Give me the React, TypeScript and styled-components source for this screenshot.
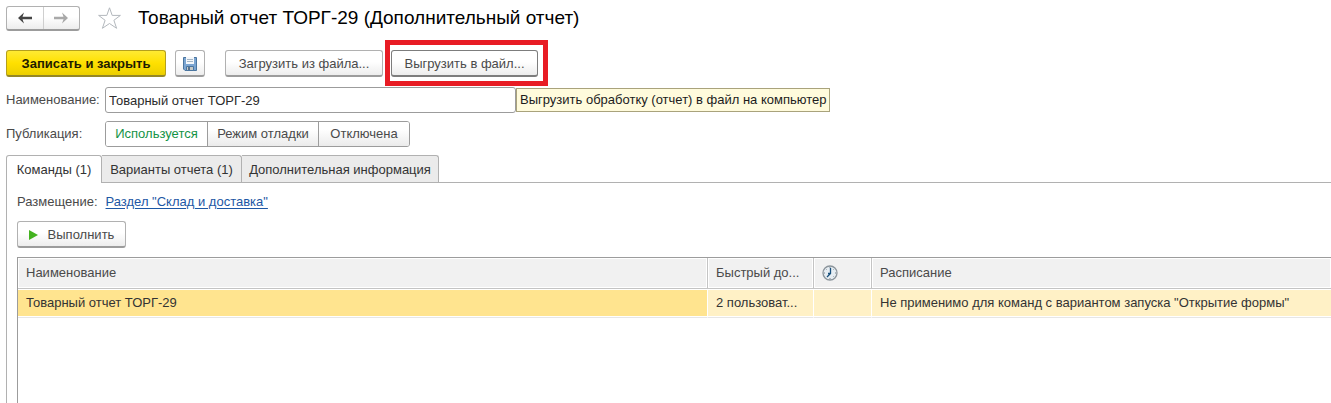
import React, { useState } from "react";
import styled, { createGlobalStyle, css } from "styled-components";

const GlobalStyle = createGlobalStyle`
  *, *::before, *::after { box-sizing: border-box; }
  html, body { margin: 0; background: #fff; }
  body, button, input, table {
    font-family: "Liberation Sans", Arial, sans-serif;
    font-size: 13px;
    line-height: 16px;
    color: #4a4a4a;
  }
`;

const Page = styled.main`
  display: flex;
  flex-direction: column;
  min-height: 100vh;
  padding: 5px 0 0 6px;
  overflow-x: hidden;
`;

const Header = styled.header`
  display: flex;
  align-items: center;
  height: 26px;
`;

const raised = css`
  border: 1px solid #b1b1b1;
  border-bottom: 2px solid #9c9c9c;
  border-radius: 3px;
  background: linear-gradient(#fff 45%, #ededed);
`;

const NavGroup = styled.nav`
  ${raised}
  display: flex;
  width: 74px;
  height: 25px;
`;

const NavButton = styled.button`
  display: flex;
  flex: 1;
  align-items: center;
  justify-content: center;
  padding: 0;
  border: 0;
  background: none;

  & + & {
    border-left: 1px solid #cfcfcf;
  }
`;

const StarButton = styled.button`
  display: flex;
  margin-left: 17px;
  padding: 0;
  border: 0;
  background: none;
`;

const Title = styled.h1`
  margin: 0 0 0 16px;
  font-size: 19px;
  line-height: 22px;
  font-weight: 400;
  color: #000;
  white-space: nowrap;
`;

const Toolbar = styled.div`
  display: flex;
  align-items: center;
  height: 46px;
  margin-top: 9px;
`;

const Button = styled.button<{ $width: number }>`
  ${raised}
  display: flex;
  flex: none;
  align-items: center;
  justify-content: center;
  width: ${(p) => p.$width}px;
  height: 27px;
  padding: 2px 0 0;
  white-space: nowrap;
  color: #4a4a4a;
`;

const PrimaryButton = styled(Button)`
  border-color: #b5a01c;
  border-bottom-color: #958725;
  background: linear-gradient(#ffea33, #ffe000 50%, #eccf00);
  font-weight: 700;
  color: #1f1c00;
`;

const SaveButton = styled(Button)`
  margin: 0 20px 0 9px;
`;

const HoverButton = styled(Button)`
  border-color: #7d7d7d;
`;

const Highlight = styled.div`
  margin-left: 2px;
  padding: 5px 5px 4px 1px;
  border: 5px solid #e81c24;
`;

const Field = styled.div`
  display: flex;
  align-items: center;
  height: 26px;
  margin-top: 1px;
`;

const OptionField = styled(Field)`
  margin-top: 8px;
`;

const FieldLabel = styled.label`
  flex: none;
  width: 99px;
  white-space: nowrap;
`;

const TextInput = styled.input`
  flex: none;
  width: 411px;
  height: 26px;
  padding: 0 3px;
  border: 1px solid #9c9c9c;
  border-radius: 3px;
  background: #fff;
  color: #2b2b2b;
  outline: none;
`;

const Tooltip = styled.div`
  flex: none;
  height: 24px;
  padding: 3px 2px 3px 3px;
  border: 1px solid #a9a37c;
  background: #fffbdc;
  color: #1c1c1c;
  white-space: nowrap;
`;

const Segments = styled.div`
  display: flex;
  height: 26px;
  border: 1px solid #9c9c9c;
  border-radius: 3px;
  overflow: hidden;
`;

const Segment = styled.label<{ $width: number }>`
  display: flex;
  align-items: center;
  justify-content: center;
  width: ${(p) => p.$width}px;
  background: linear-gradient(#fff 30%, #ebebeb);
  white-space: nowrap;

  & + & {
    border-left: 1px solid #9c9c9c;
  }

  &:has(input:checked) {
    background: #fff;
    color: #149346;
  }

  input {
    appearance: none;
    width: 0;
    height: 0;
    margin: 0;
  }
`;

const TabList = styled.div`
  display: flex;
  height: 27px;
  margin-top: 8px;
`;

const Tab = styled.button<{ $width: number }>`
  width: ${(p) => p.$width}px;
  height: 27px;
  padding: 1px 0 0;
  border: 1px solid #b1b1b1;
  border-width: 1px 1px 0 0;
  border-radius: 0 3px 0 0;
  background: #ebebeb;
  color: #333;
  white-space: nowrap;

  &:first-child {
    border-left-width: 1px;
    border-radius: 3px 3px 0 0;
  }

  &[aria-selected="true"] {
    position: relative;
    height: 28px;
    padding-top: 0;
    background: #fff;
  }
`;

const Panel = styled.section`
  display: flex;
  flex: 1;
  flex-direction: column;
  padding: 11px 0 0 10px;
  border: 1px solid #b1b1b1;
  border-width: 1px 0 0 1px;
`;

const Placement = styled.div`
  display: flex;
  gap: 8px;
`;

const Link = styled.a`
  color: #1d57a5;
  text-underline-offset: 2px;
`;

const RunButton = styled(Button)`
  gap: 10px;
  margin-top: 11px;
`;

const TableArea = styled.div`
  flex: 1;
  margin-top: 9px;
  border: 1px solid #9c9c9c;
  border-width: 1px 0 0 1px;
`;

const Table = styled.table`
  width: 100%;
  table-layout: fixed;
  border-collapse: separate;
  border-spacing: 0;
`;

const cell = css`
  padding: 0 8px;
  text-align: left;
  font-weight: 400;
  white-space: nowrap;
`;

const HeadCell = styled.th`
  ${cell}
  height: 31px;
  border-bottom: 1px solid #c4c4c4;
  background: #f1f1f1;
  box-shadow: inset 0 0 0 1px #fff;

  & + & {
    border-left: 1px solid #c4c4c4;
  }

  svg {
    display: block;
  }
`;

const BodyCell = styled.td<{ $active?: boolean }>`
  ${cell}
  height: 29px;
  border-bottom: 1px solid #e6e6e6;
  background: ${(p) => (p.$active ? "#ffe48f" : "#fff1c6")};
  box-shadow: inset 0 1px #fff, inset 0 -1px #fff;
  color: #333;

  & + & {
    border-left: 1px solid #fff;
  }
`;

const Arrow = ({ color, flip }: { color: string; flip?: boolean }) => (
  <svg width="14" height="12" viewBox="0 0 14 12" aria-hidden="true">
    <path
      d={flip ? "M14 6 8 0.5 9.5 4.8H0v2.4h9.500L8 11.500z" : "M0 6 6 0.5 4.5 4.8H14v2.4H4.500L6 11.500z"}
      fill={color}
    />
  </svg>
);

const Star = () => (
  <svg width="25" height="24" viewBox="0 0 25 24" aria-hidden="true">
    <path
      d="M12.5 1.8 15.2 9.4H23.4L16.9 14.3 19.6 22.3 12.5 17.5 5.4 22.3 8.1 14.3 1.6 9.4H9.8Z"
      fill="#fff"
      stroke="#b3b8bd"
    />
  </svg>
);

const Floppy = () => (
  <svg width="14" height="14" viewBox="0 0 14 14" aria-hidden="true">
    <path d="M0.5 0.5h13v13H2l-1.5-1.5z" fill="#7ba5d2" stroke="#4a759f" />
    <path d="M3 0h8v7H3z" fill="#f4f7fa" />
    <path d="M4 2.5h6M4 4.5h6" stroke="#a3b5c6" />
    <path d="M3.5 9.5h7v4h-7z" fill="#c6c8c5" stroke="#4a759f" />
    <path d="M5 10h2v3H5z" fill="#56718d" />
  </svg>
);

const Clock = () => (
  <svg width="16" height="16" viewBox="0 0 16 16" aria-hidden="true">
    <circle cx="8" cy="8" r="7" fill="#e6edf2" stroke="#8b949b" strokeWidth="1.3" />
    <path d="M8 2v1M8 13v1M2 8h1M13 8h1M12 4l-.5.5M4 4l.5.5M12 12l-.5-.5" stroke="#7a858e" />
    <path d="M8.5 3v5.5L5 12M8.5 8.5H6" fill="none" stroke="#174f7c" strokeWidth="1.3" />
  </svg>
);

const Play = () => (
  <svg width="9" height="10" viewBox="0 0 9 10" aria-hidden="true">
    <path d="M0 0 9 5 0 10z" fill="#43b21f" />
  </svg>
);

const modes = [
  { name: "Используется", width: 101 },
  { name: "Режим отладки", width: 111 },
  { name: "Отключена", width: 91 },
];

const tabs = [
  { name: "Команды (1)", width: 96 },
  { name: "Варианты отчета (1)", width: 140 },
  { name: "Дополнительная информация", width: 197 },
];

export default function App() {
  const [mode, setMode] = useState(0);
  const [tab, setTab] = useState(0);
  const [name, setName] = useState("Товарный отчет ТОРГ-29");

  return (
    <>
      <GlobalStyle />
      <Page>
        <Header>
          <NavGroup>
            <NavButton type="button" aria-label="Назад"><Arrow color="#444" /></NavButton>
            <NavButton type="button" aria-label="Вперед"><Arrow color="#a9a9a9" flip /></NavButton>
          </NavGroup>
          <StarButton type="button" aria-label="В избранное"><Star /></StarButton>
          <Title>Товарный отчет ТОРГ-29 (Дополнительный отчет)</Title>
        </Header>

        <Toolbar>
          <PrimaryButton type="button" $width={160}>Записать и закрыть</PrimaryButton>
          <SaveButton type="button" $width={30} aria-label="Записать"><Floppy /></SaveButton>
          <Button type="button" $width={158}>Загрузить из файла...</Button>
          <Highlight>
            <HoverButton type="button" $width={147} aria-describedby="export-hint">
              Выгрузить в файл...
            </HoverButton>
          </Highlight>
        </Toolbar>

        <Field>
          <FieldLabel htmlFor="name">Наименование:</FieldLabel>
          <TextInput id="name" value={name} onChange={(e) => setName(e.target.value)} />
          <Tooltip id="export-hint" role="tooltip">
            Выгрузить обработку (отчет) в файл на компьютер
          </Tooltip>
        </Field>

        <OptionField>
          <FieldLabel as="span" id="mode-label">Публикация:</FieldLabel>
          <Segments role="radiogroup" aria-labelledby="mode-label">
            {modes.map((m, i) => (
              <Segment key={m.name} $width={m.width}>
                <input type="radio" name="mode" checked={mode === i} onChange={() => setMode(i)} />
                {m.name}
              </Segment>
            ))}
          </Segments>
        </OptionField>

        <TabList role="tablist">
          {tabs.map((t, i) => (
            <Tab
              key={t.name}
              type="button"
              role="tab"
              aria-selected={tab === i}
              $width={t.width}
              onClick={() => setTab(i)}
            >
              {t.name}
            </Tab>
          ))}
        </TabList>

        <Panel role="tabpanel">
          <Placement>
            <span>Размещение:</span>
            <Link href="#section">Раздел "Склад и доставка"</Link>
          </Placement>
          <RunButton type="button" $width={109}><Play />Выполнить</RunButton>
          <TableArea>
            <Table>
              <colgroup>
                <col width="689" />
                <col width="106" />
                <col width="58" />
                <col />
              </colgroup>
              <thead>
                <tr>
                  <HeadCell>Наименование</HeadCell>
                  <HeadCell>Быстрый до...</HeadCell>
                  <HeadCell aria-label="По расписанию"><Clock /></HeadCell>
                  <HeadCell>Расписание</HeadCell>
                </tr>
              </thead>
              <tbody>
                <tr>
                  <BodyCell $active>Товарный отчет ТОРГ-29</BodyCell>
                  <BodyCell>2 пользоват...</BodyCell>
                  <BodyCell />
                  <BodyCell>Не применимо для команд с вариантом запуска "Открытие формы"</BodyCell>
                </tr>
              </tbody>
            </Table>
          </TableArea>
        </Panel>
      </Page>
    </>
  );
}
